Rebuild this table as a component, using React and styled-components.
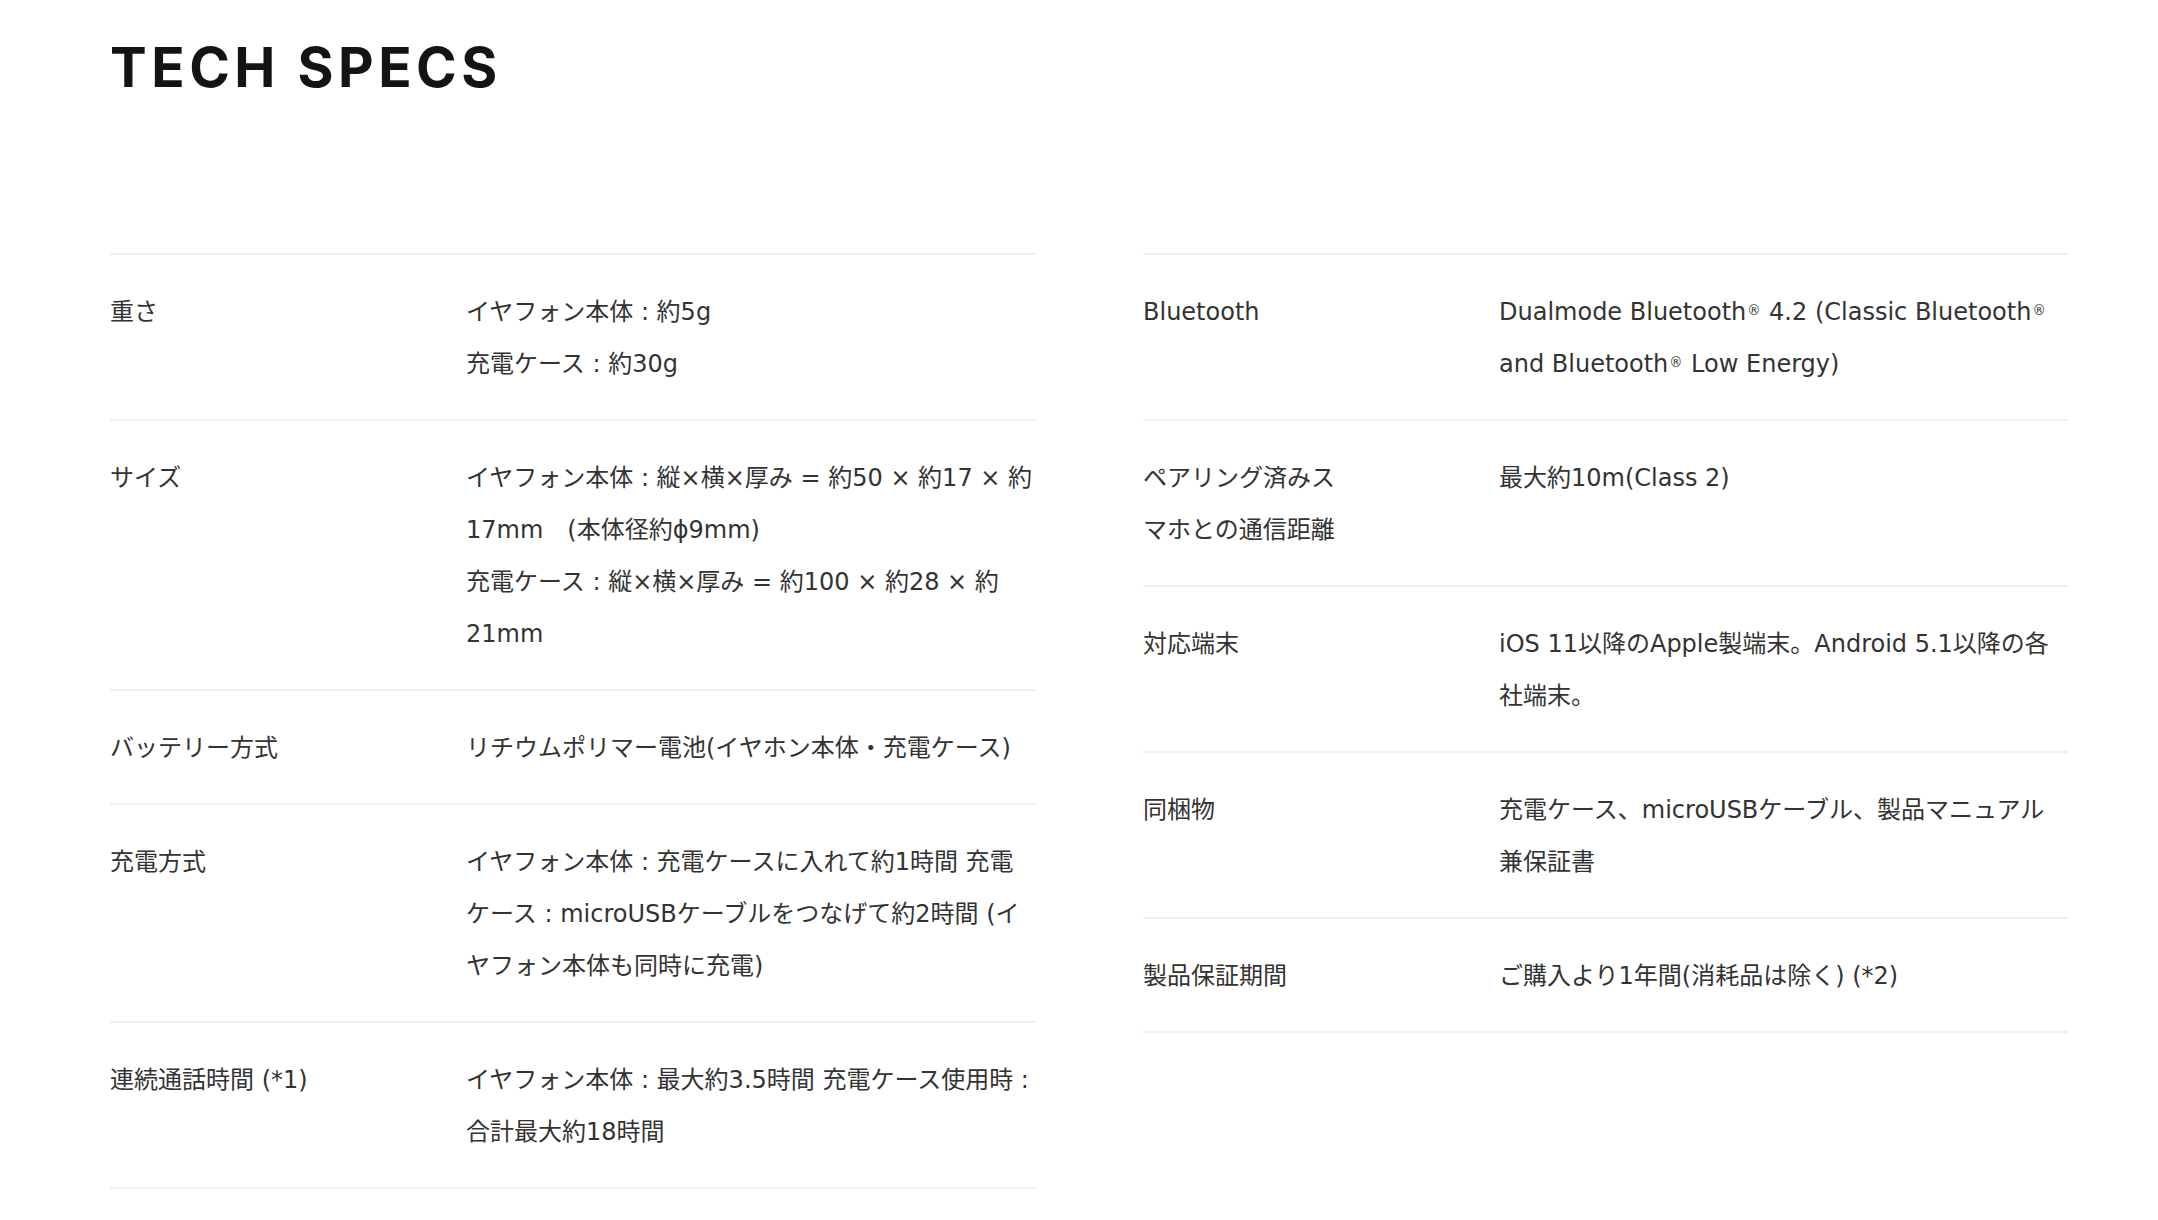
import React from 'react';
import styled, { createGlobalStyle } from 'styled-components';

const GlobalStyle = createGlobalStyle`
  html, body {
    margin: 0;
    padding: 0;
    background: #ffffff;
  }
  body {
    font-family: "DejaVu Sans", "Noto Sans CJK JP", sans-serif;
    color: #333333;
    -webkit-font-smoothing: antialiased;
  }
`;

const Page = styled.div`
  padding: 40px 91px 40px 110px;
`;

const Title = styled.h2`
  margin: 0;
  font-family: Inter, "Noto Sans", sans-serif;
  font-size: 55px;
  line-height: 55px;
  font-weight: 700;
  letter-spacing: 0.082em;
  color: #141414;
`;

const Columns = styled.div`
  display: grid;
  grid-template-columns: 925px 925px;
  column-gap: 108px;
  align-items: start;
  margin-top: 158px;
`;

const Table = styled.div`
  border-top: 2px solid #efefef;
`;

const Row = styled.div`
  display: grid;
  grid-template-columns: 356px 1fr;
  padding: 30.5px 0 29.5px;
  border-bottom: 2px solid #efefef;
  font-size: 24px;
  line-height: 52px;
`;

const Label = styled.div`
  max-width: 205px;
`;

const Value = styled.div`
  min-width: 0;
`;

const Line = styled.div``;

const Reg = styled.sup`
  font-size: 0.55em;
  vertical-align: 0.35em;
  line-height: 0;
  margin: 0 1px;
`;

const left = [
  { label: '重さ', lines: ['イヤフォン本体 : 約5g', '充電ケース : 約30g'] },
  {
    label: 'サイズ',
    lines: [
      'イヤフォン本体 : 縦×横×厚み = 約50 × 約17 × 約17mm　(本体径約ϕ9mm)',
      '充電ケース : 縦×横×厚み = 約100 × 約28 × 約21mm',
    ],
  },
  { label: 'バッテリー方式', lines: ['リチウムポリマー電池(イヤホン本体・充電ケース)'] },
  {
    label: '充電方式',
    lines: ['イヤフォン本体 : 充電ケースに入れて約1時間 充電ケース : microUSBケーブルをつなげて約2時間 (イヤフォン本体も同時に充電)'],
  },
  { label: '連続通話時間 (*1)', lines: ['イヤフォン本体 : 最大約3.5時間 充電ケース使用時 : 合計最大約18時間'] },
];

const right = [
  {
    label: 'Bluetooth',
    lines: [
      <>
        Dualmode Bluetooth<Reg>®</Reg> 4.2 (Classic Bluetooth<Reg>®</Reg> and Bluetooth<Reg>®</Reg> Low Energy)
      </>,
    ],
  },
  { label: 'ペアリング済みスマホとの通信距離', lines: ['最大約10m(Class 2)'] },
  { label: '対応端末', lines: ['iOS 11以降のApple製端末。Android 5.1以降の各社端末。'] },
  { label: '同梱物', lines: ['充電ケース、microUSBケーブル、製品マニュアル兼保証書'] },
  { label: '製品保証期間', lines: ['ご購入より1年間(消耗品は除く) (*2)'] },
];

const SpecTable = ({ rows }) => (
  <Table>
    {rows.map((row) => (
      <Row key={row.label}>
        <Label>{row.label}</Label>
        <Value>
          {row.lines.map((line, i) => (
            <Line key={i}>{line}</Line>
          ))}
        </Value>
      </Row>
    ))}
  </Table>
);

const App = () => (
  <>
    <GlobalStyle />
    <Page>
      <Title>TECH SPECS</Title>
      <Columns>
        <SpecTable rows={left} />
        <SpecTable rows={right} />
      </Columns>
    </Page>
  </>
);

export default App;
